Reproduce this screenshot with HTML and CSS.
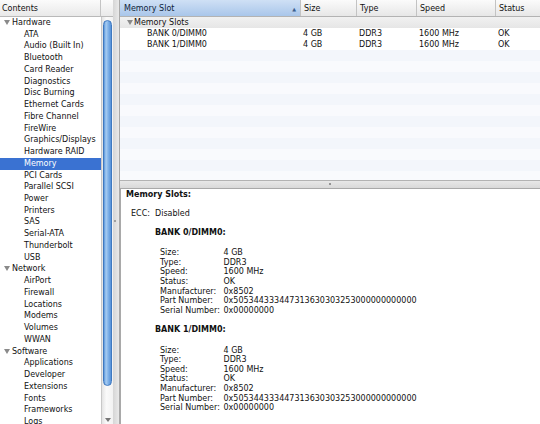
FILE: index.html
```html
<!DOCTYPE html>
<html lang="en">
<head>
    <meta charset="UTF-8">
    <title>System Information - Memory</title>
    <link rel="stylesheet" href="styles.css">
</head>
<body>
<div class="window">

    <!-- left: contents tree -->
    <div class="sidebar">
        <div class="side-head">Contents</div>
        <div class="side-corner"></div>
        <ul class="tree">
            <li class="group"><span class="tri"></span>Hardware</li>
            <li>ATA</li>
            <li>Audio (Built In)</li>
            <li>Bluetooth</li>
            <li>Card Reader</li>
            <li>Diagnostics</li>
            <li>Disc Burning</li>
            <li>Ethernet Cards</li>
            <li>Fibre Channel</li>
            <li>FireWire</li>
            <li>Graphics/Displays</li>
            <li>Hardware RAID</li>
            <li class="selected">Memory</li>
            <li>PCI Cards</li>
            <li>Parallel SCSI</li>
            <li>Power</li>
            <li>Printers</li>
            <li>SAS</li>
            <li>Serial-ATA</li>
            <li>Thunderbolt</li>
            <li>USB</li>
            <li class="group"><span class="tri"></span>Network</li>
            <li>AirPort</li>
            <li>Firewall</li>
            <li>Locations</li>
            <li>Modems</li>
            <li>Volumes</li>
            <li>WWAN</li>
            <li class="group"><span class="tri"></span>Software</li>
            <li>Applications</li>
            <li>Developer</li>
            <li>Extensions</li>
            <li>Fonts</li>
            <li>Frameworks</li>
            <li>Logs</li>
        </ul>
        <div class="scrollbar">
            <div class="thumb"></div>
            <div class="arrow"></div>
        </div>
    </div>

    <div class="vsplit"><span class="grip"></span></div>

    <!-- right: table + details -->
    <div class="main">
        <div class="table">
            <div class="thead">
                <div class="th sorted">Memory Slot<span class="sort">&#9650;</span></div>
                <div class="th">Size</div>
                <div class="th">Type</div>
                <div class="th">Speed</div>
                <div class="th">Status</div>
            </div>
            <div class="tbody">
                <div class="tr group-row">
                    <div class="td first"><span class="tri"></span>Memory Slots</div>
                    <div class="td"></div><div class="td"></div><div class="td"></div><div class="td"></div>
                </div>
                <div class="tr">
                    <div class="td first slot">BANK 0/DIMM0</div>
                    <div class="td">4 GB</div>
                    <div class="td">DDR3</div>
                    <div class="td">1600 MHz</div>
                    <div class="td">OK</div>
                </div>
                <div class="tr">
                    <div class="td first slot">BANK 1/DIMM0</div>
                    <div class="td">4 GB</div>
                    <div class="td">DDR3</div>
                    <div class="td">1600 MHz</div>
                    <div class="td">OK</div>
                </div>
            </div>
        </div>

        <div class="hsplit"><span class="grip"></span></div>

        <div class="detail">
            <div class="title">Memory Slots:</div>
            <div class="ecc"><span class="ecc-key">ECC:</span>Disabled</div>

            <div class="bank">
                <div class="bank-title">BANK 0/DIMM0:</div>
                <dl class="kv">
                    <dt>Size:</dt><dd>4 GB</dd>
                    <dt>Type:</dt><dd>DDR3</dd>
                    <dt>Speed:</dt><dd>1600 MHz</dd>
                    <dt>Status:</dt><dd>OK</dd>
                    <dt>Manufacturer:</dt><dd>0x8502</dd>
                    <dt>Part Number:</dt><dd>0x505344333447313630303253000000000000</dd>
                    <dt>Serial Number:</dt><dd>0x00000000</dd>
                </dl>
            </div>

            <div class="bank">
                <div class="bank-title">BANK 1/DIMM0:</div>
                <dl class="kv">
                    <dt>Size:</dt><dd>4 GB</dd>
                    <dt>Type:</dt><dd>DDR3</dd>
                    <dt>Speed:</dt><dd>1600 MHz</dd>
                    <dt>Status:</dt><dd>OK</dd>
                    <dt>Manufacturer:</dt><dd>0x8502</dd>
                    <dt>Part Number:</dt><dd>0x505344333447313630303253000000000000</dd>
                    <dt>Serial Number:</dt><dd>0x00000000</dd>
                </dl>
            </div>
        </div>
    </div>
</div>
</body>
</html>
```

FILE: styles.css
```css
*, *::before, *::after{
    box-sizing: border-box;
}
html, body{
    margin: 0;
    padding: 0;
    height: 100%;
}
body{
    font-family: "DejaVu Sans", sans-serif;
    font-size: 8px;
    color: #111;
    background: #fff;
    overflow: hidden;
}
.window{
    display: flex;
    height: 424px;
    width: 540px;
}

/* sidebar */
.sidebar{
    width: 113px;
    display: grid;
    grid-template-columns: 101px 12px;
    grid-template-rows: 17px 1fr;
    background: #fff;
    border-right: 1px solid #a9a9a9;
}
.side-head{
    background: linear-gradient(#fbfbfb, #e9e9e9);
    border-bottom: 1px solid #b9b9b9;
    border-right: 1px solid #c4c4c4;
    padding: 3px 0 0 2px;
    line-height: 11px;
}
.side-corner{
    background: linear-gradient(#fbfbfb, #e9e9e9);
    border-bottom: 1px solid #b9b9b9;
}
.tree{
    list-style: none;
    margin: 0;
    padding: 0;
    overflow: hidden;
}
.tree li{
    height: 11.74px;
    line-height: 11.74px;
    padding-left: 24px;
    white-space: nowrap;
}
.tree li.group{
    padding-left: 4px;
}
.tree li.selected{
    background: #3a72d2;
    color: #fff;
}
.tri{
    display: inline-block;
    width: 0;
    height: 0;
    border-left: 3px solid transparent;
    border-right: 3px solid transparent;
    border-top: 5px solid #8a8a8a;
    margin-right: 2px;
    vertical-align: 0;
}
.scrollbar{
    position: relative;
    background: linear-gradient(90deg, #e4e4e4, #fafafa 40%, #f2f2f2);
    border-left: 1px solid #c8c8c8;
}
.thumb{
    position: absolute;
    top: 3px;
    left: 1px;
    right: 1px;
    height: 366px;
    border-radius: 5px;
    background: linear-gradient(90deg, #5a96da, #a8cdf2 30%, #86b6ea 55%, #5591d8);
    border: 1px solid #3f79c0;
}
.arrow{
    position: absolute;
    bottom: 2px;
    left: 3px;
    width: 0;
    height: 0;
    border-left: 3px solid transparent;
    border-right: 3px solid transparent;
    border-top: 4px solid #777;
}

/* splitters */
.vsplit{
    position: relative;
    width: 7px;
    background: linear-gradient(90deg, #d6d6d6, #e9e9e9);
    border-right: 1px solid #a9a9a9;
}
.vsplit .grip{
    position: absolute;
    left: 1px;
    top: 220px;
    width: 2px;
    height: 2px;
    background: #8a8a8a;
    border-radius: 1px;
}
.hsplit{
    position: relative;
    height: 9px;
    background: linear-gradient(#e8e8e8, #d9d9d9);
    border-top: 1px solid #b3b3b3;
    border-bottom: 1px solid #a9a9a9;
}
.hsplit .grip{
    position: absolute;
    left: 209px;
    top: 2px;
    width: 2px;
    height: 2px;
    background: #7a7a7a;
    border-radius: 1px;
}

/* main */
.main{
    flex: 1;
    display: flex;
    flex-direction: column;
    min-width: 0;
}
.table{
    height: 180px;
    display: flex;
    flex-direction: column;
}
.thead, .tr{
    display: grid;
    grid-template-columns: 180px 56px 60px 79px 1fr;
}
.thead{
    height: 17px;
    background: linear-gradient(#fbfbfb, #e7e7e7);
    border-bottom: 1px solid #b3b3b3;
}
.th{
    position: relative;
    padding: 3px 0 0 3px;
    line-height: 11px;
    border-left: 1px solid #c3c3c3;
}
.th:first-child{
    border-left: none;
    padding-left: 4px;
}
.th.sorted{
    background: linear-gradient(#cfe0f5, #a9c6ea);
    color: #0e1f3a;
}
.sort{
    position: absolute;
    right: 4px;
    top: 4px;
    font-size: 5px;
    color: #3c5f8e;
}
.tbody{
    flex: 1;
    background: repeating-linear-gradient(#f9fafd 0, #f9fafd 11px, #f3f6fb 11px, #f3f6fb 22px);
}
.tr{
    height: 11px;
    line-height: 11px;
    background: #fff;
}
.group-row{
    background: linear-gradient(#f1f1f1, #e6e6e6);
}
.td{
    padding-left: 3px;
    white-space: nowrap;
}
.td.first{
    padding-left: 7px;
}
.td.slot{
    padding-left: 27px;
}
.group-row .tri{
    margin-right: 1px;
}

/* details */
.detail{
    flex: 1;
    padding: 1px 0 0 5px;
    line-height: 9.6px;
    border-left: 1px solid #a9a9a9;
}
.title, .bank-title{
    font-weight: bold;
}
.title{
    margin-bottom: 9px;
}
.ecc{
    padding-left: 5px;
    margin-bottom: 2px;
}
.ecc-key{
    display: inline-block;
    width: 24px;
}
.bank{
    margin-top: 10px;
    padding-left: 29px;
}
.bank-title{
    margin-bottom: 10.5px;
}
.kv{
    margin: 0;
    padding-left: 5px;
    display: grid;
    grid-template-columns: 63.5px 1fr;
}
.kv dt, .kv dd{
    margin: 0;
    white-space: nowrap;
}
```
